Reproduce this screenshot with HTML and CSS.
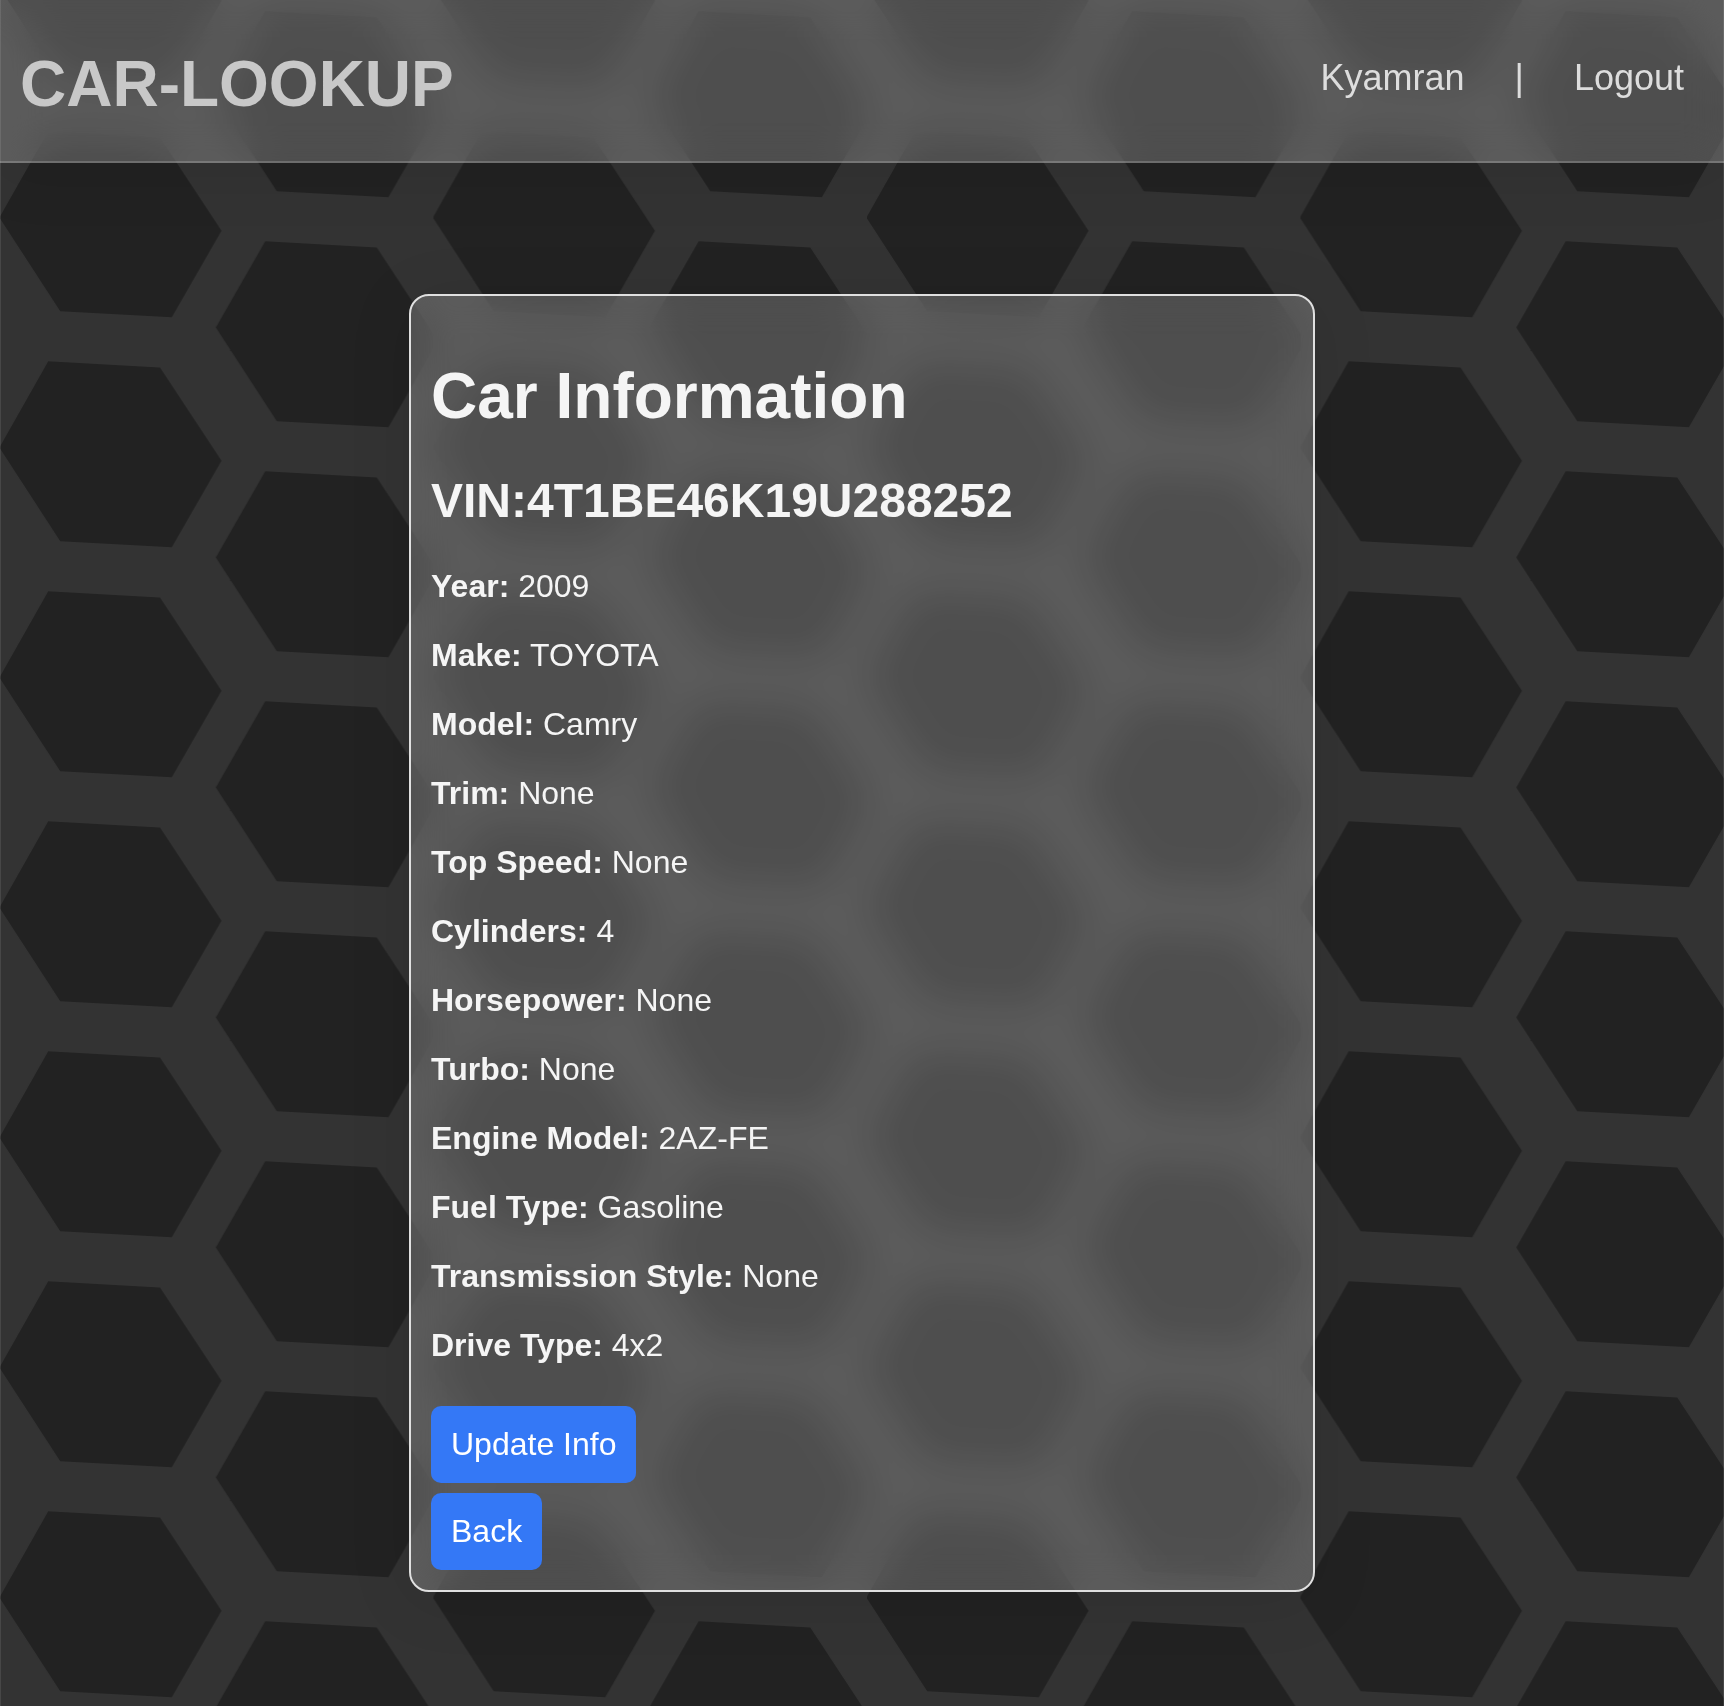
FILE: index.html
```html
<!DOCTYPE html>
<html lang="en">
<head>
<meta charset="utf-8">
<title>Car-Lookup</title>
<link rel="stylesheet" href="styles.css">
</head>
<body>
<svg class="backdrop" aria-hidden="true">
  <defs>
    <pattern id="hexagons" x="0" y="120" width="433.5" height="230" patternUnits="userSpaceOnUse">
      <g fill="#222">
        <path d="M48.2 11.2L160 17.4L221.5 110.7L171.8 197.2L60.2 191.2L-.6 97.5Z"/>
        <path id="hex" d="M265.2 121.2L376.8 127.4L438.1 220.7L388.4 307.2L276.8 301.2L215.8 207.5Z"/>
        <use href="#hex" y="-230"/>
      </g>
    </pattern>
  </defs>
  <rect width="100%" height="100%" fill="url(#hexagons)"/>
</svg>

<header class="header">
  <h1 class="brand">CAR-LOOKUP</h1>
  <nav class="nav"><a>Kyamran</a><span>|</span><a>Logout</a></nav>
</header>

<main class="card">
  <h1 class="title">Car Information</h1>
  <h2 class="vin">VIN:4T1BE46K19U288252</h2>
  <p><b>Year:</b> 2009</p>
  <p><b>Make:</b> TOYOTA</p>
  <p><b>Model:</b> Camry</p>
  <p><b>Trim:</b> None</p>
  <p><b>Top Speed:</b> None</p>
  <p><b>Cylinders:</b> 4</p>
  <p><b>Horsepower:</b> None</p>
  <p><b>Turbo:</b> None</p>
  <p><b>Engine Model:</b> 2AZ-FE</p>
  <p><b>Fuel Type:</b> Gasoline</p>
  <p><b>Transmission Style:</b> None</p>
  <p><b>Drive Type:</b> 4x2</p>
  <div class="actions">
    <a class="button">Update Info</a>
    <a class="button">Back</a>
  </div>
</main>
</body>
</html>
```
FILE: styles.css
```css
* { box-sizing: border-box; }

body {
  margin: 0;
  height: 1706px;
  overflow: hidden;
  background: #333;
  color: #f5f5f5;
  font: 32px/37px "Liberation Sans", Arial, sans-serif;
}

/* hairline frame around the window */
body::after {
  content: "";
  position: fixed;
  inset: 0;
  border: solid rgba(255, 255, 255, .1);
  border-width: 0 1px;
  pointer-events: none;
}

.backdrop {
  position: fixed;
  inset: 0;
  width: 100%;
  height: 100%;
  z-index: -1;
}

.header,
.card {
  background: rgba(255, 255, 255, .2);
  box-shadow: 0 8px 64px rgba(0, 0, 0, .1);
  backdrop-filter: blur(20px);
}

.header {
  display: flex;
  justify-content: space-between;
  height: 163px;
  padding: 0 40px 0 20px;
  border-bottom: 2px solid rgba(255, 255, 255, .18);
}

.brand {
  margin: 47px 0 0;
  font-size: 64px;
  line-height: 74px;
  color: #c8c8c8;
}

.nav {
  display: flex;
  gap: 50px;
  margin-top: 57px;
  height: 41px;
  font-size: 36px;
  line-height: 41px;
  color: #ddd;
}

.card {
  width: 906px;
  height: 1298px;
  margin: 131px auto 0;
  padding: 20px;
  border: 2px solid #e0e0e0;
  border-radius: 20px;
}

.title {
  margin: 44px 0 40px;
  font-size: 64px;
  line-height: 73px;
}

.vin {
  margin: 0 0 40px;
  font-size: 48px;
  line-height: 55px;
}

.card p { margin: 0 0 32px; }

.actions {
  display: flex;
  flex-direction: column;
  align-items: flex-start;
  gap: 10px;
  padding-top: 10px;
}

.button {
  padding: 20px;
  border-radius: 10px;
  background: #3478f6;
  color: #fff;
}
```
